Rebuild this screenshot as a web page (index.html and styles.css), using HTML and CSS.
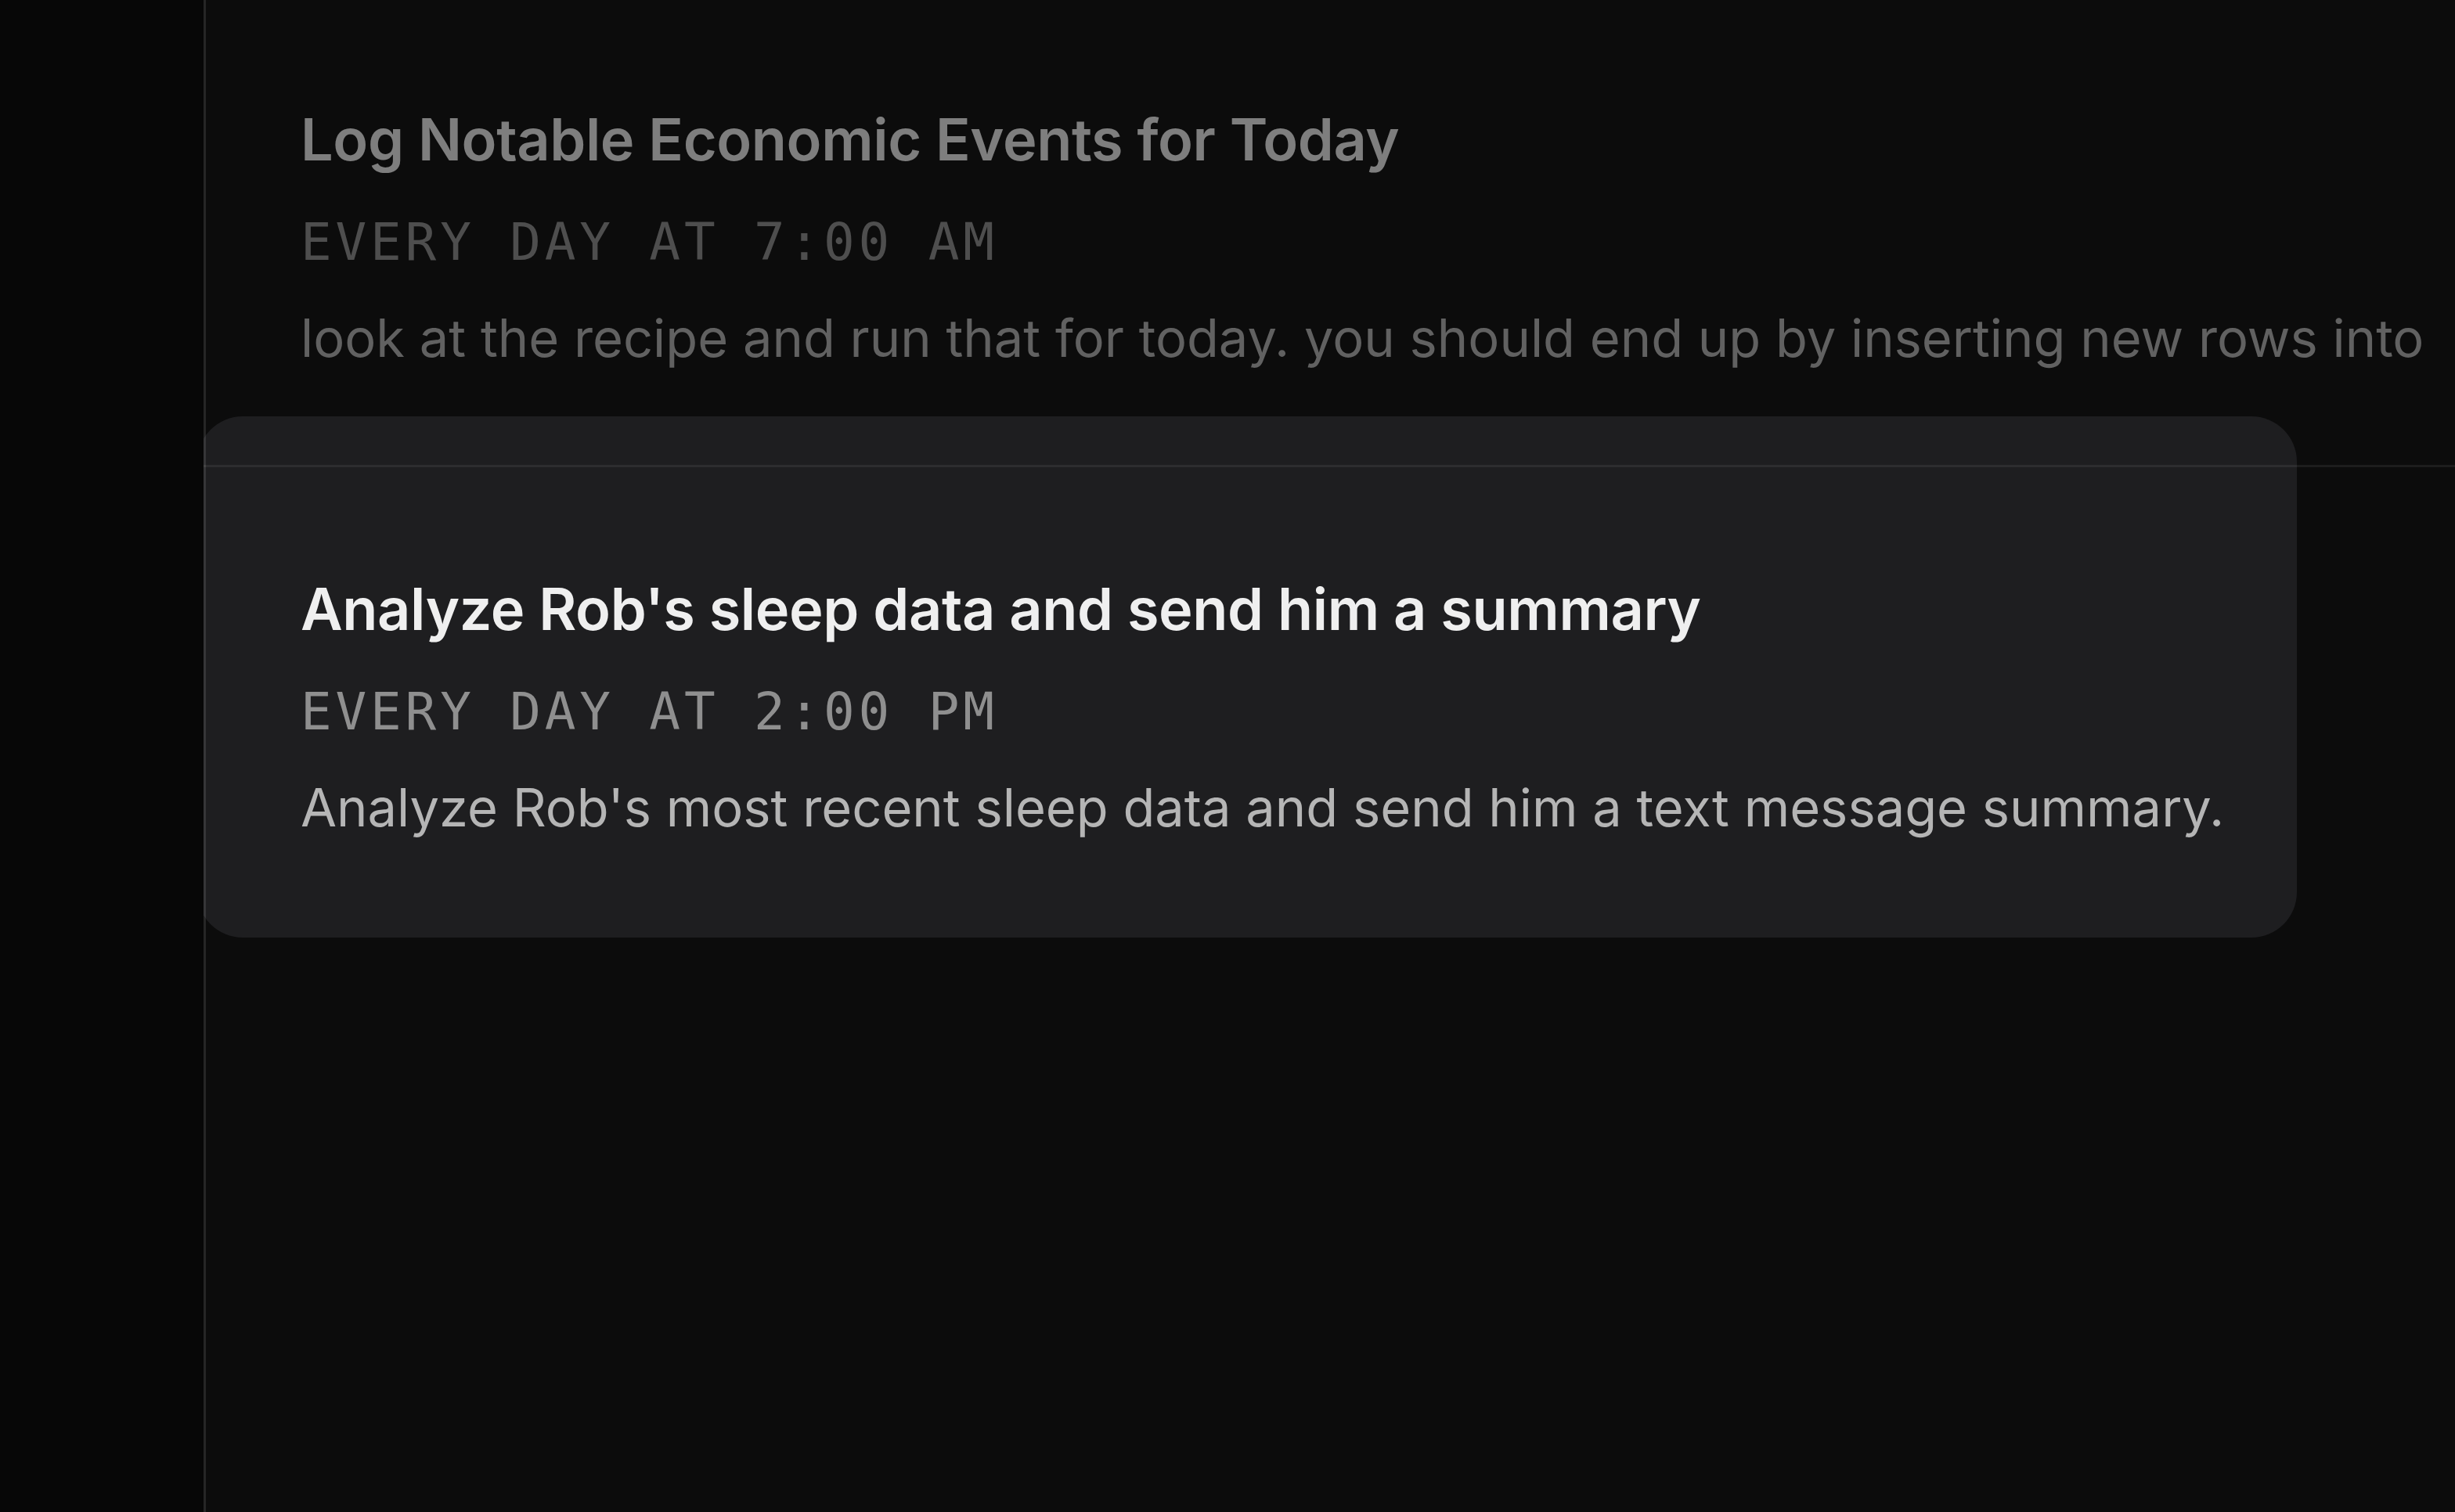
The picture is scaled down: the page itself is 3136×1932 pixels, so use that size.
FILE: index.html
```html
<!DOCTYPE html>
<html lang="en">
<head>
<meta charset="utf-8">
<title>Scheduled tasks</title>
<link rel="stylesheet" href="styles.css">
</head>
<body>
  <aside class="sidebar"></aside>
  <main class="main">
    <ul class="task-list">
      <li class="task task-dim">
        <h2 class="task-title">Log Notable Economic Events for Today</h2>
        <div class="task-schedule">EVERY DAY AT 7:00 AM</div>
        <p class="task-desc">look at the recipe and run that for today. you should end up by inserting new rows into</p>
      </li>
      <li class="task task-active">
        <h2 class="task-title">Analyze Rob's sleep data and send him a summary</h2>
        <div class="task-schedule">EVERY DAY AT 2:00 PM</div>
        <p class="task-desc">Analyze Rob's most recent sleep data and send him a text message summary.</p>
      </li>
    </ul>
  </main>
</body>
</html>
```
FILE: styles.css
```css
html, body {
  margin: 0;
  padding: 0;
  height: 100%;
}
body {
  display: flex;
  background: #070707;
  overflow: hidden;
  font-family: "Inter", "Noto Sans", sans-serif;
}
.sidebar {
  width: 260px;
  flex: none;
  background: #070707;
}
.main {
  position: relative;
  flex: 1;
  background: #0c0c0c;
  overflow: hidden;
}
.main::before {
  content: "";
  position: absolute;
  left: 0;
  top: 0;
  bottom: 0;
  width: 3px;
  background: rgba(255, 255, 255, 0.11);
  z-index: 3;
}
.task-list {
  list-style: none;
  margin: -6px 0 0 0;
  padding: 0;
}
.task {
  position: relative;
  height: 600px;
  box-sizing: border-box;
  padding: 141px 0 0 124px;
  display: flex;
  flex-direction: column;
}
.task::after {
  content: "";
  position: absolute;
  left: 0;
  right: 0;
  top: 0;
  height: 3px;
  background: rgba(255, 255, 255, 0.07);
  z-index: 2;
}
.task > * {
  position: relative;
  z-index: 1;
}
.task-active::before {
  content: "";
  position: absolute;
  left: -8px;
  right: 202px;
  top: -62px;
  bottom: -4px;
  border-radius: 58px;
  background: #1e1e20;
  z-index: 0;
}
.task-dim {
  opacity: 0.5;
}
.task-title {
  margin: 0;
  font-size: 73.8px;
  line-height: 88px;
  font-weight: 600;
  letter-spacing: -0.005em;
  color: #efefef;
  white-space: nowrap;
}
.task-schedule {
  margin-top: 47px;
  font-family: "DejaVu Sans Mono", "Liberation Mono", monospace;
  font-size: 66px;
  line-height: 80px;
  letter-spacing: 4.8px;
  color: #8f8f8f;
  white-space: nowrap;
}
.task-desc {
  margin: 42px 0 0 0;
  font-size: 66.8px;
  line-height: 80px;
  color: #b5b5b5;
  white-space: nowrap;
}
```
